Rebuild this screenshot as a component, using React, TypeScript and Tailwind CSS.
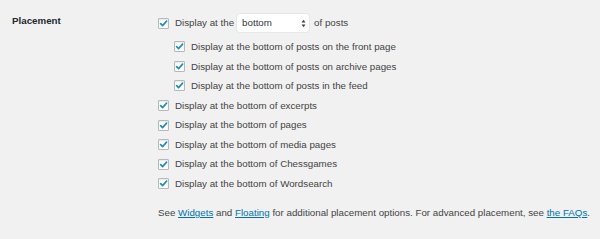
import React from "react";

const Check = () => (
  <span className="w-[11px] h-[11px] shrink-0 bg-white border border-[#b4b9be] rounded-[1px] shadow-[inset_0_1px_2px_rgba(0,0,0,0.1)] flex items-center justify-center">
    <svg width="9" height="9" viewBox="0 0 10 10">
      <path d="M1.8 5.2 L4 7.4 L8.4 2.4" fill="none" stroke="#1e8cbe" strokeWidth="1.8" strokeLinecap="round" strokeLinejoin="round" />
    </svg>
  </span>
);

const Row = ({ text, indent }: { text: string; indent?: boolean }) => (
  <div className={`h-[19.6px] flex items-center gap-[6px] ${indent ? "pl-[16px]" : ""}`}>
    <Check />
    <span>{text}</span>
  </div>
);

export default function App() {
  return (
    <div
      className="w-[600px] h-[239px] bg-[#f1f1f1] text-[#444] flex pl-[12px] pt-[14px] text-[9.75px] leading-none"
      style={{ fontFamily: '"Liberation Sans", Arial, sans-serif' }}
    >
      <div className="w-[146px] shrink-0 pt-[2px] h-[12px] font-bold text-[#23282d]">Placement</div>
      <div className="flex flex-col">
        <div className="h-[18px] flex items-center">
          <Check />
          <span className="ml-[6px]">Display at the</span>
          <div className="ml-[3px] w-[72px] h-[18px] bg-white rounded-[3px] shadow-[0_0_0_1px_rgba(0,0,0,0.04)] flex items-center justify-between pl-[5px] pr-[3px] text-[#32373c]">
            <span>bottom</span>
            <svg width="5" height="9" viewBox="0 0 5 9">
              <path d="M0.5 3.5 L2.5 0.8 L4.5 3.5 Z" fill="#444" />
              <path d="M0.5 5.5 L2.5 8.2 L4.5 5.5 Z" fill="#444" />
            </svg>
          </div>
          <span className="ml-[5px]">of posts</span>
        </div>
        <div className="mt-[5px] flex flex-col">
          <Row indent text="Display at the bottom of posts on the front page" />
          <Row indent text="Display at the bottom of posts on archive pages" />
          <Row indent text="Display at the bottom of posts in the feed" />
          <Row text="Display at the bottom of excerpts" />
          <Row text="Display at the bottom of pages" />
          <Row text="Display at the bottom of media pages" />
          <Row text="Display at the bottom of Chessgames" />
          <Row text="Display at the bottom of Wordsearch" />
        </div>
        <p className="mt-[13px] leading-[12px]">
          See <a className="text-[#0073aa] underline">Widgets</a> and{" "}
          <a className="text-[#0073aa] underline">Floating</a> for additional placement options. For advanced placement, see{" "}
          <a className="text-[#0073aa] underline">the FAQs</a>.
        </p>
      </div>
    </div>
  );
}
